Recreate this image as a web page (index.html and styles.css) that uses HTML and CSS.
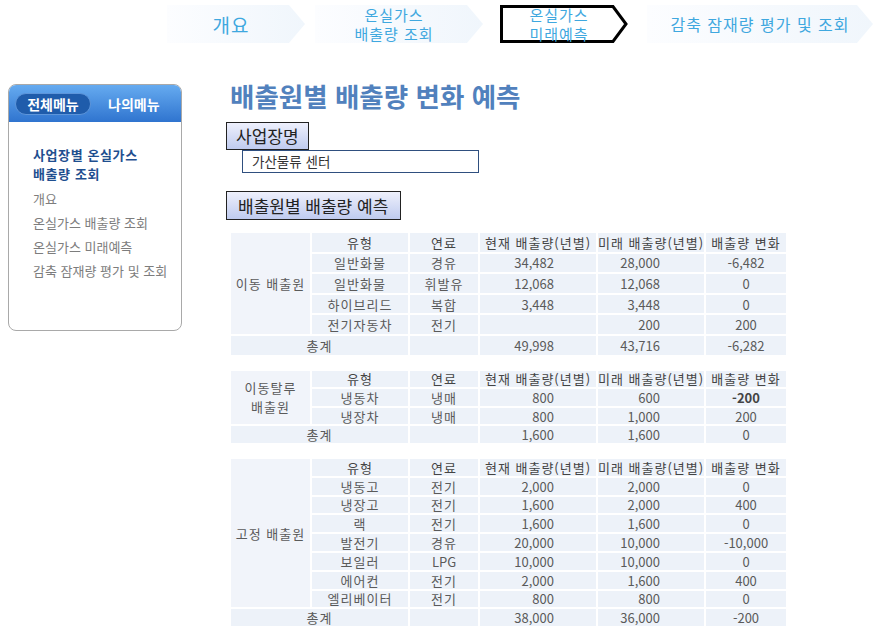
FILE: index.html
```html
<!DOCTYPE html>
<html lang="ko">
<head>
<meta charset="utf-8">
<title>배출원별 배출량 변화 예측</title>
<link rel="stylesheet" href="styles.css">
</head>
<body>
<div class="topnav">
  <div class="step s1"><span>개요</span></div>
  <div class="step s2"><span>온실가스<br>배출량 조회</span></div>
  <div class="step active">
    <svg class="frame" width="128" height="38" viewBox="0 0 128 38"><polygon points="1.5,1.5 113,1.5 126,19 113,36.5 1.5,36.5" fill="#fff" stroke="#000" stroke-width="3" stroke-linejoin="miter"/></svg>
    <span>온실가스<br>미래예측</span>
  </div>
  <div class="step s4"><span>감축 잠재량 평가 및 조회</span></div>
</div>

<div class="layout">
  <aside class="sidebar">
    <div class="side-head">
      <span class="pill">전체메뉴</span>
      <span class="tab2">나의메뉴</span>
    </div>
    <div class="side-body">
      <div class="side-title">사업장별 온실가스<br>배출량 조회</div>
      <ul class="side-list">
        <li>개요</li>
        <li>온실가스 배출량 조회</li>
        <li>온실가스 미래예측</li>
        <li>감축 잠재량 평가 및 조회</li>
      </ul>
    </div>
  </aside>

  <main class="main">
    <h1 class="title">배출원별 배출량 변화 예측</h1>
    <div class="label">사업장명</div>
    <div class="field">가산물류 센터</div>
    <div class="label label2">배출원별 배출량 예측</div>

    <table class="emis t1">
      <colgroup><col class="c1"><col class="c2"><col class="c3"><col class="c4"><col class="c5"><col class="c6"></colgroup>
      <tr><td class="src" rowspan="5">이동 배출원</td><th>유형</th><th>연료</th><th>현재 배출량(년별)</th><th>미래 배출량(년별)</th><th>배출량 변화</th></tr>
      <tr><td>일반화물</td><td>경유</td><td class="now">34,482</td><td class="fut">28,000</td><td class="num">-6,482</td></tr>
      <tr><td>일반화물</td><td>휘발유</td><td class="now">12,068</td><td class="fut">12,068</td><td class="num">0</td></tr>
      <tr><td>하이브리드</td><td>복합</td><td class="now">3,448</td><td class="fut">3,448</td><td class="num">0</td></tr>
      <tr><td>전기자동차</td><td>전기</td><td class="now"></td><td class="fut">200</td><td class="num">200</td></tr>
      <tr><td colspan="2">총계</td><td></td><td class="now">49,998</td><td class="fut">43,716</td><td class="num">-6,282</td></tr>
    </table>

    <table class="emis t2">
      <colgroup><col class="c1"><col class="c2"><col class="c3"><col class="c4"><col class="c5"><col class="c6"></colgroup>
      <tr><td class="src" rowspan="3">이동탈루<br>배출원</td><th>유형</th><th>연료</th><th>현재 배출량(년별)</th><th>미래 배출량(년별)</th><th>배출량 변화</th></tr>
      <tr><td>냉동차</td><td>냉매</td><td class="now">800</td><td class="fut">600</td><td class="num bold">-200</td></tr>
      <tr><td>냉장차</td><td>냉매</td><td class="now">800</td><td class="fut">1,000</td><td class="num">200</td></tr>
      <tr><td colspan="2">총계</td><td></td><td class="now">1,600</td><td class="fut">1,600</td><td class="num">0</td></tr>
    </table>

    <table class="emis t3">
      <colgroup><col class="c1"><col class="c2"><col class="c3"><col class="c4"><col class="c5"><col class="c6"></colgroup>
      <tr><td class="src" rowspan="8">고정 배출원</td><th>유형</th><th>연료</th><th>현재 배출량(년별)</th><th>미래 배출량(년별)</th><th>배출량 변화</th></tr>
      <tr><td>냉동고</td><td>전기</td><td class="now">2,000</td><td class="fut">2,000</td><td class="num">0</td></tr>
      <tr><td>냉장고</td><td>전기</td><td class="now">1,600</td><td class="fut">2,000</td><td class="num">400</td></tr>
      <tr><td>랙</td><td>전기</td><td class="now">1,600</td><td class="fut">1,600</td><td class="num">0</td></tr>
      <tr><td>발전기</td><td>경유</td><td class="now">20,000</td><td class="fut">10,000</td><td class="num">-10,000</td></tr>
      <tr><td>보일러</td><td class="num">LPG</td><td class="now">10,000</td><td class="fut">10,000</td><td class="num">0</td></tr>
      <tr><td>에어컨</td><td>전기</td><td class="now">2,000</td><td class="fut">1,600</td><td class="num">400</td></tr>
      <tr><td>엘리베이터</td><td>전기</td><td class="now">800</td><td class="fut">800</td><td class="num">0</td></tr>
      <tr><td colspan="2">총계</td><td></td><td class="now">38,000</td><td class="fut">36,000</td><td class="num">-200</td></tr>
    </table>
  </main>
</div>
</body>
</html>
```

FILE: styles.css
```css
* { box-sizing: border-box; }
body {
  margin: 0;
  background: #fff;
  font-family: "Noto Sans CJK KR", "Noto Sans", sans-serif;
  color: #333;
}

/* step navigation */
.topnav {
  display: flex;
  height: 48px;
  padding: 5px 0 0 167px;
}
.step {
  position: relative;
  height: 38px;
  display: flex;
  align-items: center;
  justify-content: center;
  padding-right: 10px;
  color: #3fa8df;
  font-size: 15px;
  letter-spacing: 1px;
  line-height: 19px;
  text-align: center;
  background: linear-gradient(to right, #fcfdff, #f0f6fc);
  clip-path: polygon(0 0, calc(100% - 16px) 0, 100% 50%, calc(100% - 16px) 100%, 0 100%);
}
.step span { position: relative; }
.s1 { width: 138px; margin-right: 10px; font-size: 19px; letter-spacing: 1px; }
.s2 { width: 168px; margin-right: 17px; }
.active { width: 128px; margin-right: 19px; background: none; clip-path: none; }
.active .frame { position: absolute; left: 0; top: 0; }
.s4 { width: 226px; padding-right: 0; font-size: 16px; }

/* layout */
.layout {
  display: flex;
  gap: 44px;
  padding: 36px 0 0 8px;
}

/* sidebar */
.sidebar {
  width: 174px;
  height: 247px;
  flex: none;
  border: 1px solid #a9a9a9;
  border-radius: 8px;
  overflow: hidden;
}
.side-head {
  height: 37px;
  display: flex;
  align-items: center;
  padding-left: 6px;
  background: linear-gradient(#66abf0, #2f74cf);
  color: #fff;
  font-size: 14px;
  font-weight: bold;
}
.pill {
  width: 76px;
  height: 22px;
  line-height: 20px;
  text-align: center;
  border-radius: 11px;
  background: #1f5cab;
  border: 1px solid #5d95da;
}
.tab2 { margin-left: 17px; }
.side-body { padding: 23px 0 0 24px; }
.side-title {
  font-size: 13px;
  letter-spacing: 0.6px;
  font-weight: bold;
  line-height: 19px;
  color: #1f4f8f;
}
.side-list {
  list-style: none;
  margin: 4px 0 0;
  padding: 0;
  font-size: 13px;
  line-height: 24px;
  color: #7d7d7d;
}

/* main */
.main {
  width: 580px;
  display: flex;
  flex-direction: column;
  align-items: flex-start;
}
.title {
  margin: -3px 0 0;
  padding-left: 4px;
  font-size: 26.5px;
  line-height: 30px;
  font-weight: bold;
  color: #5181bd;
}
.label {
  height: 28px;
  margin-top: 11px;
  padding: 0 9px;
  border: 1px solid #222;
  font-size: 17px;
  line-height: 26px;
  color: #222;
  background: linear-gradient(#eef0fc, #bfcbef);
}
.label2 { height: 29px; margin-top: 18px; line-height: 27px; padding: 0 12px 0 11px; }
.field {
  width: 237px;
  height: 23px;
  margin-left: 16px;
  padding-left: 9px;
  border: 1px solid #2f4f7f;
  font-size: 13.5px;
  line-height: 21px;
  color: #333;
}

/* tables */
.emis {
  width: 557px;
  margin-left: 3px;
  table-layout: fixed;
  border-collapse: collapse;
  font-size: 13px;
  letter-spacing: 1px;
  color: #5a5a5a;
}
.t1 { margin-top: 11px; }
.t2 { margin-top: 12px; }
.t3 { margin-top: 12px; }
.c1 { width: 81px; }
.c2 { width: 98px; }
.c3 { width: 70px; }
.c4 { width: 118px; }
.c5 { width: 108px; }
.c6 { width: 82px; }
.emis td, .emis th {
  padding: 0;
  border: 2px solid #fff;
  background: #edf2f9;
  text-align: center;
  font-weight: normal;
  line-height: 15px;
  white-space: nowrap;
}
.emis th { color: #444; }
.t1 tr { height: 20.6px; }
.t2 tr { height: 18.6px; }
.t3 tr { height: 18.8px; }
.emis td.src { background: #f1f4fa; line-height: 19px; }
.emis td.now, .emis td.fut, .emis td.num { letter-spacing: 0; }
.emis td.now { text-align: right; padding-right: 42px; }
.emis td.fut { text-align: right; padding-right: 44px; }
.emis td.bold { font-weight: bold; color: #444; }
```
